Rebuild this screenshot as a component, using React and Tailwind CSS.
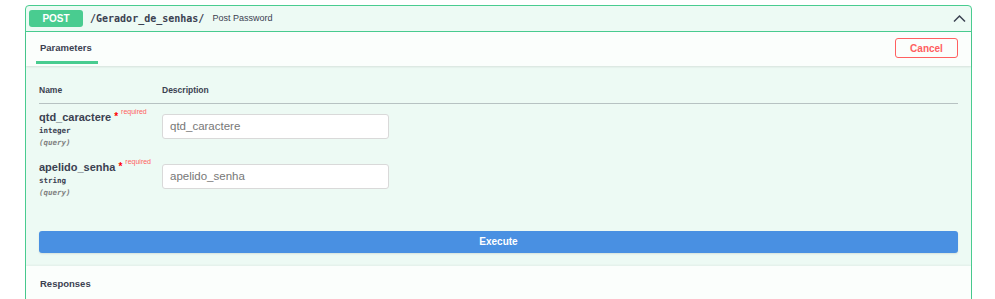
import React from "react";

const sans = { fontFamily: '"Liberation Sans", Arial, sans-serif' };

function ParamRow({ name, type, placeholder }) {
  return (
    <div className="flex items-start h-[50px]">
      <div className="w-[123px] shrink-0 -mt-[4px]">
        <div className="flex items-start text-[11px] font-semibold text-[#3b4151] leading-[14px]">
          <span>{name}</span>
          <span className="ml-[3px] text-[#ff0000] text-[10px]">*</span>
          <span className="ml-[3px] text-[7px] font-normal text-[#ff6060] leading-[8px] -mt-[2px]">required</span>
        </div>
        <div className="mt-[1px] text-[7.5px] font-bold text-[#3b4151] leading-[12px]" style={{ fontFamily: '"DejaVu Sans Mono", monospace' }}>{type}</div>
        <div className="text-[7.5px] italic font-bold text-[#808080] leading-[12px]" style={{ fontFamily: '"DejaVu Sans Mono", monospace' }}>(query)</div>
      </div>
      <div className="w-[227px] h-[25px] bg-white border border-[#d9d9d9] rounded-[3px] flex items-center px-[7px] text-[11.5px] text-[#777]">
        {placeholder}
      </div>
    </div>
  );
}

export default function App() {
  return (
    <div className="w-[995px] h-[299px] bg-white overflow-hidden" style={sans}>
      <div className="ml-[25px] mt-[5px] w-[947px] h-[300px] border border-[#49cc90] rounded-t-[4px] bg-[#edfaf4] flex flex-col">
        {/* summary */}
        <div className="h-[26px] shrink-0 border-b border-[#49cc90] flex items-center pl-[3px] pr-[5px]">
          <div className="w-[54px] h-[17px] bg-[#49cc90] rounded-[3px] flex items-center justify-center text-white text-[10px] font-bold">POST</div>
          <div className="ml-[7px] text-[10px] font-bold text-[#3b4151]" style={{ fontFamily: '"DejaVu Sans Mono", monospace' }}>/Gerador_de_senhas/</div>
          <div className="ml-[8px] text-[9px] text-[#3b4151]">Post Password</div>
          <div className="ml-auto">
            <svg width="13" height="9" viewBox="0 0 13 9" fill="none">
              <path d="M1 7.5 L6.5 2 L12 7.5" stroke="#3b4151" strokeWidth="1.5" />
            </svg>
          </div>
        </div>
        {/* tab header */}
        <div className="h-[34px] shrink-0 bg-[#fbfefc] shadow-[0_1px_2px_rgba(0,0,0,0.1)] flex items-stretch px-[9px] relative">
          <div className="relative flex items-center px-[5px] -mt-[1px]">
            <span className="text-[9.5px] font-bold text-[#3b4151]">Parameters</span>
            <div className="absolute left-[1px] right-[-1px] bottom-[2px] h-[3px] bg-[#49cc90]" />
          </div>
          <div className="ml-auto flex items-center pr-[4px] -mt-[2px]">
            <div className="w-[63px] h-[20px] border border-[#ff6060] rounded-[3px] flex items-center justify-center text-[10px] font-bold text-[#ff6060] bg-transparent">Cancel</div>
          </div>
        </div>
        {/* parameters */}
        <div className="px-[13px] pt-[18px] shrink-0">
          <div className="flex text-[8.5px] font-bold text-[#3b4151] pb-[6px] border-b border-[rgba(59,65,81,0.3)]">
            <div className="w-[123px]">Name</div>
            <div>Description</div>
          </div>
          <div className="pt-[10px] flex flex-col">
            <ParamRow name="qtd_caractere" type="integer" placeholder="qtd_caractere" />
            <ParamRow name="apelido_senha" type="string" placeholder="apelido_senha" />
          </div>
        </div>
        <div className="px-[13px] mt-[17px] shrink-0">
          <div className="h-[22px] bg-[#4990e2] rounded-[3px] shadow-[0_1px_2px_rgba(0,0,0,0.1)] flex items-center justify-center text-white text-[10px] font-bold">Execute</div>
        </div>
        <div className="mt-[13px] flex-1 bg-[#fbfefc] shadow-[0_-1px_2px_rgba(0,0,0,0.05)] px-[14px] pt-[11px]">
          <div className="text-[9.5px] font-bold text-[#3b4151]">Responses</div>
        </div>
      </div>
    </div>
  );
}
